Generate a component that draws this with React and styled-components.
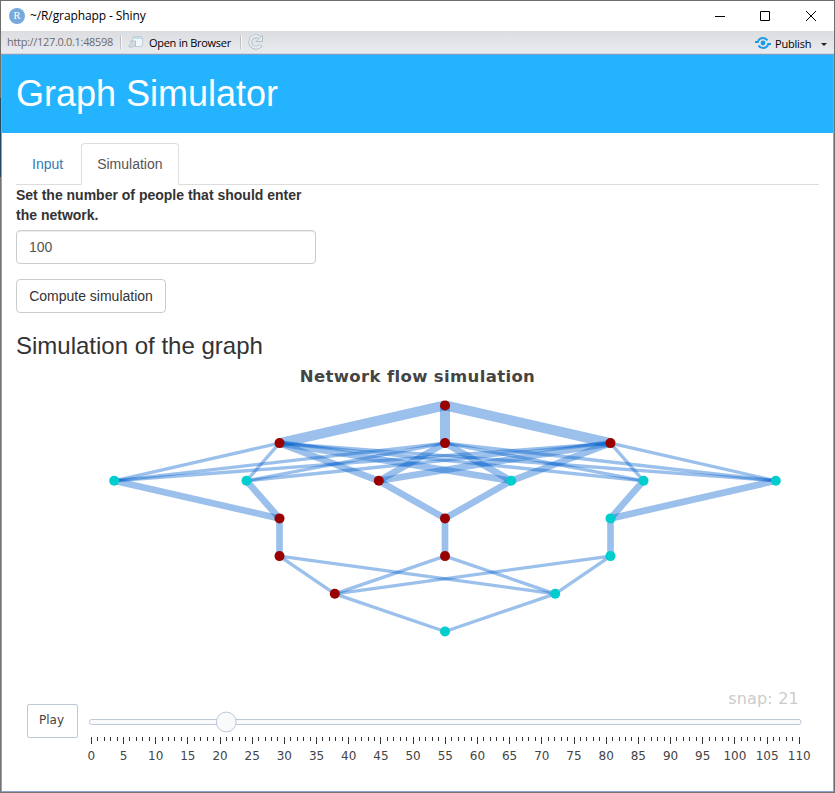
import React from "react";
import styled, { createGlobalStyle } from "styled-components";

const Global = createGlobalStyle`
  * { box-sizing: border-box; }
  body { margin: 0; background: #fff; overflow: hidden; }
`;

const Window = styled.div`
  width: 835px;
  height: 793px;
  padding: 1px;
  background:
    linear-gradient(#6e6e6e, #6e6e6e) right / 1px 100% no-repeat,
    linear-gradient(#6e6e6e 0 98px, #1f4a60 98px 177px, #747474 177px);
  display: flex;
  flex-direction: column;
`;
const TitleBar = styled.header`
  height: 30px;
  flex: none;
  background: #fff;
  display: flex;
  align-items: center;
  padding: 0 0 1px 8px;
  font: 12px/16px "Open Sans", sans-serif;
  color: #000;
`;
const Title = styled.span`
  margin-left: 5px;
  padding-top: 1px;
  flex: 1;
  letter-spacing: -0.1px;
`;
const Controls = styled.div`
  display: flex;
  padding-top: 1px;
  svg { display: block; }
`;
const Toolbar = styled.div`
  height: 23px;
  flex: none;
  display: flex;
  align-items: center;
  padding: 0 6px;
  background: linear-gradient(#dcdde1, #eaebef);
  border-bottom: 1px solid #d3d5d9;
  font: 11px/16px "Open Sans", sans-serif;
  color: #000;
`;
const Label = styled.span`
  color: ${(p) => p.$color || "#000"};
  letter-spacing: ${(p) => p.$spacing || 0}px;
  width: ${(p) => p.$width}px;
  white-space: nowrap;
  padding: ${(p) => p.$drop || 0}px 0 0 ${(p) => p.$indent || 0}px;
`;
const Separator = styled.i`
  width: 2px;
  height: 14px;
  margin: 0 6px 0 7px;
  border-left: 1px solid #bfc1c5;
  border-right: 1px solid #f8f8fa;
`;
const Spacer = styled.span`
  flex: 1;
`;
const Caret = styled.i`
  border: 3px solid transparent;
  border-top-color: #222;
  border-bottom: 0;
  margin: 4px 1px 0 9px;
`;
const Page = styled.main`
  flex: 1;
  border: 1px solid #8ba3d3;
  border-top-color: #7b9fd0;
  background: #fff;
  font: 14px/20px "Liberation Sans", Arial, sans-serif;
  color: #333;
`;
const Banner = styled.div`
  height: 78px;
  background: #24b3ff;
  padding: 19px 14px 0;
`;
const Heading = styled.h1`
  margin: 0;
  font-size: 36px;
  line-height: 39.6px;
  font-weight: 400;
  color: #fff;
`;
const Content = styled.div`
  padding: 10px 14px 0;
`;
const Tabs = styled.nav`
  display: flex;
  height: 42px;
  border-bottom: 1px solid #ddd;
`;
const Tab = styled.a`
  height: 42px;
  padding: 10px 15px;
  margin-right: 2px;
  border: 1px solid ${(p) => (p.$active ? "#ddd" : "transparent")};
  border-bottom-color: ${(p) => (p.$active ? "#fff" : "transparent")};
  border-radius: 4px 4px 0 0;
  color: ${(p) => (p.$active ? "#555" : "#337ab7")};
`;
const FieldLabel = styled.label`
  display: block;
  width: 300px;
  font-weight: 700;
  margin-bottom: 5px;
`;
const Field = styled.input`
  display: block;
  width: 300px;
  height: 34px;
  padding: 6px 12px;
  border: 1px solid #ccc;
  border-radius: 4px;
  box-shadow: inset 0 1px 1px rgba(0, 0, 0, 0.075);
  font: inherit;
  color: #555;
  margin-bottom: 15px;
`;
const Action = styled.button`
  display: block;
  width: 150px;
  height: 34px;
  padding: 0;
  border: 1px solid #ccc;
  border-radius: 4px;
  background: #fff;
  font: inherit;
  color: #333;
`;
const SubHeading = styled.h3`
  margin: 20px 0 0;
  font-size: 24px;
  line-height: 26px;
  font-weight: 400;
`;
const Chart = styled.figure`
  margin: 0;
  font-family: Verdana, "DejaVu Sans", sans-serif;
  color: #444;
`;
const ChartTitle = styled.figcaption`
  height: 31px;
  padding-top: 8px;
  text-align: center;
  font-weight: 700;
  font-size: 16.5px;
  line-height: 19px;
  letter-spacing: 0.35px;
`;
const Network = styled.svg`
  display: block;
`;
const Snap = styled.div`
  height: 24px;
  padding: 1px 20px 0 0;
  text-align: right;
  font-size: 16px;
  line-height: 24px;
  letter-spacing: 0.2px;
  color: #ccc;
`;
const Player = styled.div`
  display: flex;
  padding-left: 11px;
`;
const Play = styled.button`
  width: 51px;
  height: 34px;
  margin: -6px 10px 0 0;
  padding: 0 2px 2px 0;
  border: 1px solid #bec8d9;
  border-radius: 2px;
  background: #fff;
  font: 12px "DejaVu Sans", sans-serif;
  color: #444;
`;

const X = [279.5, 445, 610.5];
const WIDE = [114.2, 246.5, 378.8, 511.2, 643.5, 775.8];
const Y = [405.4, 443.1, 480.8, 518.4, 556.1, 593.8, 631.5];
const LOW = [334.8, 555.2];

const edges = [];
const link = (x1, y1, x2, y2, w) => edges.push([x1, Y[y1], x2, Y[y2], w]);
X.forEach((x) => link(445, 0, x, 1, 10));
X.forEach((x) =>
  WIDE.forEach((w, i) => link(x, 1, w, 2, i === 2 || i === 3 ? 6.67 : 3.33))
);
WIDE.forEach((w, i) => link(w, 2, X[[0, 0, 1, 1, 2, 2][i]], 3, 6.67));
X.forEach((x) => link(x, 3, x, 4, 6.67));
X.forEach((x) => LOW.forEach((l) => link(x, 4, l, 5, 3.33)));
LOW.forEach((l) => link(l, 5, 445, 6, 3.33));

const RED = "#990000";
const CYAN = "#00cdcd";
const nodes = [
  [445, 0, RED],
  ...X.map((x) => [x, 1, RED]),
  ...WIDE.map((x, i) => [x, 2, i === 2 ? RED : CYAN]),
  ...X.map((x, i) => [x, 3, i < 2 ? RED : CYAN]),
  ...X.map((x, i) => [x, 4, i < 2 ? RED : CYAN]),
  [LOW[0], 5, RED],
  [LOW[1], 5, CYAN],
  [445, 6, CYAN],
];

const steps = Array.from({ length: 111 }, (_, i) => i);
const stepX = (i) => 3.3 + i * 6.436;

function RLogo() {
  return (
    <svg width="16" height="16" viewBox="0 0 16 16">
      <circle cx="8" cy="8" r="8" fill="#75aadb" />
      <text x="8" y="11.4" textAnchor="middle" fontSize="10.5" fontFamily="Liberation Serif, serif" fill="#fff">R</text>
    </svg>
  );
}

function WindowButtons() {
  return (
    <svg width="120" height="28" fill="none" stroke="#000" strokeWidth="1">
      <path d="M1 14.500h10M46.500 9.500h9v9h-9zM92 9l10 10M102 9L92 19" />
    </svg>
  );
}

function OpenIcon() {
  return (
    <svg width="17" height="14" viewBox="0 0 17 14">
      <rect x="4.500" y="1.500" width="10" height="10" rx="1.500" fill="#f2f6f9" stroke="#c3ced6" />
      <path d="M5 2h9v2H5z" fill="#c4dded" />
      <path d="M.5 11L4 7.500 2.500 6h5v5L6 9.500 2.500 13z" fill="#d8dfe4" stroke="#a9b5be" strokeWidth=".8" />
    </svg>
  );
}

function RefreshIcon() {
  return (
    <svg width="16" height="16" viewBox="0 0 16 16" fill="none">
      <path d="M12.900 11.200A5.800 5.800 0 1 1 11.800 3.600" stroke="#adbbc6" strokeWidth="3.800" />
      <path d="M12.500 11.500A5.800 5.800 0 1 1 12 3.700" stroke="#e7edf1" strokeWidth="2.200" />
      <path d="M14.500 1v6.500H8z" fill="#e4ebef" stroke="#adbbc6" strokeWidth=".9" />
    </svg>
  );
}

function PublishIcon() {
  return (
    <svg width="16" height="16" viewBox="0 0 16 16" fill="none" stroke="#1b9be6" strokeWidth="2.200">
      <circle cx="8" cy="9" r="2.400" fill="#1b9be6" stroke="none" />
      <path d="M0 8h2.700C3.600 5.300 5.600 4 8 4c1.900 0 3.300.8 4.400 2.300M16 10h-2.700C12.400 12.700 10.400 14 8 14c-1.900 0-3.300-.8-4.400-2.300" />
    </svg>
  );
}

function Slider() {
  return (
    <svg width="728" height="64" fontFamily="DejaVu Sans, sans-serif" fontSize="12" fill="#444">
      <rect x="1.500" y="9.500" width="711.500" height="5" rx="2" fill="#f8fafc" stroke="#bec8d9" />
      <circle cx="138.300" cy="12" r="9.900" fill="#f8fafc" stroke="#bec8d9" />
      {steps.map((i) => (
        <rect key={i} x={Math.round(stepX(i) - 0.5)} y="27" width="1" height={i % 5 ? 4 : 7} fill="#333" />
      ))}
      {steps.filter((i) => i % 5 === 0).map((i) => (
        <text key={i} x={stepX(i)} y="50" textAnchor="middle">{i}</text>
      ))}
    </svg>
  );
}

export default function App() {
  return (
    <Window>
      <Global />
      <TitleBar>
        <RLogo />
        <Title>~/R/graphapp - Shiny</Title>
        <Controls><WindowButtons /></Controls>
      </TitleBar>
      <Toolbar>
        <Label $color="#6b6b6f" $width={106} $spacing={-0.32}>http://127.0.0.1:48598</Label>
        <Separator />
        <OpenIcon />
        <Label $width={88} $spacing={-0.28} $drop={2} $indent={4}>Open in Browser</Label>
        <Separator />
        <RefreshIcon />
        <Spacer />
        <PublishIcon />
        <Label $width={41} $spacing={-0.2} $drop={3} $indent={4}>Publish</Label>
        <Caret />
      </Toolbar>
      <Page>
        <Banner><Heading>Graph Simulator</Heading></Banner>
        <Content>
          <Tabs>
            <Tab>Input</Tab>
            <Tab $active>Simulation</Tab>
          </Tabs>
          <FieldLabel htmlFor="people">Set the number of people that should enter the network.</FieldLabel>
          <Field id="people" defaultValue="100" />
          <Action>Compute simulation</Action>
          <SubHeading>Simulation of the graph</SubHeading>
          <Chart>
            <ChartTitle>Network flow simulation</ChartTitle>
            <Network width="803" height="296" viewBox="16 390 803 296">
              {edges.map(([x1, y1, x2, y2, w], i) => (
                <line key={i} x1={x1} y1={y1} x2={x2} y2={y2} strokeWidth={w} stroke="#0561cd" strokeOpacity=".4" />
              ))}
              {nodes.map(([x, y, c], i) => (
                <circle key={i} cx={x} cy={Y[y]} r="5" fill={c} />
              ))}
            </Network>
            <Snap>snap: 21</Snap>
            <Player>
              <Play>Play</Play>
              <Slider />
            </Player>
          </Chart>
        </Content>
      </Page>
    </Window>
  );
}
